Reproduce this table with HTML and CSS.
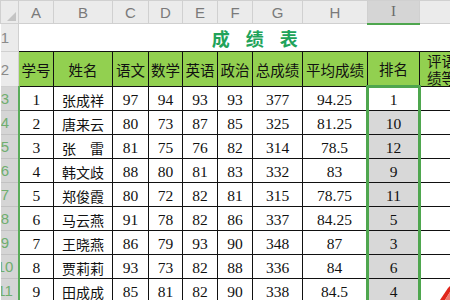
FILE: index.html
```html
<!DOCTYPE html>
<html lang="zh">
<head>
<meta charset="utf-8">
<link rel="stylesheet" href="styles.css">
</head>
<body>
<table class="sheet">
  <colgroup>
    <col class="c-rn"><col class="c-a"><col class="c-b"><col class="c-c"><col class="c-d"><col class="c-e"><col class="c-f"><col class="c-g"><col class="c-h"><col class="c-i"><col class="c-j">
  </colgroup>
  <tr class="colhead">
    <th class="corner"><span class="tri"></span></th>
    <th>A</th><th>B</th><th>C</th><th>D</th><th>E</th><th>F</th><th>G</th><th>H</th><th class="sel">I</th><th class="last"></th>
  </tr>
  <tr class="r1">
    <th class="rn"><div class="rnum">1</div></th>
    <td colspan="10" class="title">成绩表</td>
  </tr>
  <tr class="r2">
    <th class="rn"><div class="rnum">2</div></th>
    <td class="hd">学号</td><td class="hd">姓名</td><td class="hd">语文</td><td class="hd">数学</td><td class="hd">英语</td><td class="hd">政治</td><td class="hd">总成绩</td><td class="hd">平均成绩</td><td class="hd">排名</td><td class="hd wrap"><div class="line">评语</div><div class="line">绩等</div></td>
  </tr>
  <tr class="d"><th class="rn on"><div class="rnum">3</div></th><td>1</td><td class="nm">张成祥</td><td>97</td><td>94</td><td>93</td><td>93</td><td>377</td><td>94.25</td><td class="rk active">1</td><td></td></tr>
  <tr class="d"><th class="rn on"><div class="rnum">4</div></th><td>2</td><td class="nm">唐来云</td><td>80</td><td>73</td><td>87</td><td>85</td><td>325</td><td>81.25</td><td class="rk">10</td><td></td></tr>
  <tr class="d"><th class="rn on"><div class="rnum">5</div></th><td>3</td><td class="nm">张　雷</td><td>81</td><td>75</td><td>76</td><td>82</td><td>314</td><td>78.5</td><td class="rk">12</td><td></td></tr>
  <tr class="d"><th class="rn on"><div class="rnum">6</div></th><td>4</td><td class="nm">韩文歧</td><td>88</td><td>80</td><td>81</td><td>83</td><td>332</td><td>83</td><td class="rk">9</td><td></td></tr>
  <tr class="d"><th class="rn on"><div class="rnum">7</div></th><td>5</td><td class="nm">郑俊霞</td><td>80</td><td>72</td><td>82</td><td>81</td><td>315</td><td>78.75</td><td class="rk">11</td><td></td></tr>
  <tr class="d"><th class="rn on"><div class="rnum">8</div></th><td>6</td><td class="nm">马云燕</td><td>91</td><td>78</td><td>82</td><td>86</td><td>337</td><td>84.25</td><td class="rk">5</td><td></td></tr>
  <tr class="d"><th class="rn on"><div class="rnum">9</div></th><td>7</td><td class="nm">王晓燕</td><td>86</td><td>79</td><td>93</td><td>90</td><td>348</td><td>87</td><td class="rk">3</td><td></td></tr>
  <tr class="d"><th class="rn on"><div class="rnum">10</div></th><td>8</td><td class="nm">贾莉莉</td><td>93</td><td>73</td><td>82</td><td>88</td><td>336</td><td>84</td><td class="rk">6</td><td></td></tr>
  <tr class="d"><th class="rn on"><div class="rnum">11</div></th><td>9</td><td class="nm">田成成</td><td>85</td><td>81</td><td>82</td><td>90</td><td>338</td><td>84.5</td><td class="rk">4</td><td></td></tr>
</table>
<svg class="mark" width="10" height="14" viewBox="0 0 10 14">
  <polygon points="0,14 8,2 10,0 10,6 5,14" fill="#e0261b"/>
  <polygon points="5,14 10,6 10,14" fill="#f07a70"/>
</svg>
</body>
</html>
```
FILE: styles.css
```css
html, body {
  margin: 0;
  padding: 0;
  background: #ffffff;
  overflow: hidden;
}
body {
  width: 450px;
  height: 300px;
  position: relative;
}
.sheet {
  border-collapse: collapse;
  table-layout: fixed;
  width: 490px;
  font-family: "Liberation Serif", "Noto Sans CJK SC", serif;
  font-size: 15.5px;
  color: #111;
}
.c-rn { width: 18px; }
.c-a { width: 35px; }
.c-b { width: 59px; }
.c-c { width: 36px; }
.c-d { width: 34px; }
.c-e { width: 35px; }
.c-f { width: 35px; }
.c-g { width: 50px; }
.c-h { width: 65px; }
.c-i { width: 52px; }
.c-j { width: 71px; }

td, th {
  padding: 0;
  overflow: hidden;
  white-space: nowrap;
  text-align: center;
  vertical-align: middle;
}

/* column header row */
.colhead { height: 23px; }
.colhead th {
  background: #ebebeb;
  border: 1px solid #d0d0d0;
  font-family: "Liberation Sans", "Noto Sans", sans-serif;
  font-weight: normal;
  font-size: 15px;
  color: #7a7a7a;
}
.colhead th.sel {
  background: #d5d5d5;
  border-bottom: 2px solid #4ea64e;
  color: #6a6a6a;
  font-family: "Liberation Serif", serif;
}
.colhead th.last { border-right: none; }
.corner { position: relative; }
.tri {
  position: absolute;
  right: 2px;
  bottom: 2px;
  width: 0;
  height: 0;
  border-left: 9px solid transparent;
  border-bottom: 9px solid #c4c4c4;
}

/* row numbers */
.rn {
  background: #ebebeb;
  border: 1px solid #d0d0d0;
  border-left: none;
  font-family: "Liberation Sans", "Noto Sans", sans-serif;
  font-weight: normal;
  font-size: 15px;
  color: #8a8a8a;
}
.rnum {
  width: 9px;
  display: flex;
  justify-content: center;
}
.rn.on {
  background: #d5d5d5;
  color: #6fae6f;
  border-bottom-color: #c2c2c2;
  border-right: 2px solid #5aac5a;
}

/* title row */
.r1 { height: 28px; }
.title {
  font-family: "Noto Sans CJK SC", sans-serif;
  font-weight: bold;
  font-size: 18px;
  color: #21a35a;
  letter-spacing: 16px;
  padding-left: 16px;
  border-bottom: 1px solid #111;
}

/* header row */
.r2 { height: 35px; }
.hd {
  background: #92d050;
  border: 1px solid #111;
  font-family: "Noto Sans CJK SC", sans-serif;
  font-size: 14.5px;
  color: #111;
}
.hd.wrap {
  text-align: left;
  padding-left: 7px;
  border-right: none;
}
.line {
  line-height: 17px;
  height: 17px;
}

/* data rows */
.d { height: 24px; }
.d td {
  border: 1px solid #111;
  padding-top: 2px;
}
.d td.nm {
  font-family: "Noto Sans CJK SC", sans-serif;
  font-size: 14px;
}
.d td.rk {
  background: #d8d8d8;
  border-left: 3px solid #4ea64e;
  border-right: 3px solid #4ea64e;
}
.d td.rk.active {
  background: #ffffff;
  border-top: 3px solid #4ea64e;
}

.mark {
  position: absolute;
  right: 0;
  bottom: 0;
}
```
